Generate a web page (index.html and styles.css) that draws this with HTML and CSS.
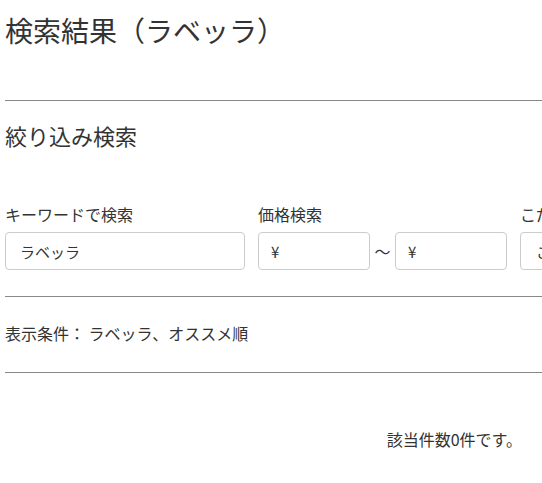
FILE: index.html
```html
<!DOCTYPE html>
<html lang="ja">

<head>
  <meta charset="UTF-8" />
  <meta name="viewport" content="width=device-width, initial-scale=1.0" />
  <title>検索結果</title>
  <link rel="stylesheet" href="styles.css">
</head>

<body>

  <div class="page">
    <h1 class="title">検索結果（ラベッラ）</h1>
    <hr class="rule rule-top">

    <h2 class="subtitle">絞り込み検索</h2>

    <div class="filters">
      <div class="field">
        <label class="label">キーワードで検索</label>
        <input class="input input-keyword" type="text" value="ラベッラ" />
      </div>

      <div class="field">
        <label class="label">価格検索</label>
        <div class="range">
          <input class="input input-price" type="text" value="¥" />
          <span class="tilde">～</span>
          <input class="input input-price" type="text" value="¥" />
        </div>
      </div>

      <div class="field">
        <label class="label">こだわり検索</label>
        <input class="input input-extra" type="text" value="こだわり" />
      </div>
    </div>

    <hr class="rule rule-mid">

    <p class="condition">表示条件： ラベッラ、オススメ順</p>

    <hr class="rule rule-bottom">

    <p class="count">該当件数0件です。</p>
  </div>

</body>

</html>
```

FILE: styles.css
```css
body {
  margin: 0;
  overflow: hidden;
  background-color: #fff;
  color: #333;
  font-family: "Noto Sans CJK JP", "Noto Sans", sans-serif;
}

.page {
  padding-left: 5px;
}

.title {
  margin: 12px 0 0;
  font-size: 28px;
  font-weight: normal;
  line-height: 36px;
}

.rule {
  margin: 0;
  border: 0;
  border-top: 1px solid #888;
}

.rule-top {
  margin-top: 52px;
}

.subtitle {
  margin: 19px 0 0;
  font-size: 22px;
  font-weight: normal;
  line-height: 30px;
}

.filters {
  margin-top: 53px;
  display: flex;
  gap: 13px;
  width: 800px;
}

.field {
  display: flex;
  flex-direction: column;
}

.label {
  font-size: 16px;
  line-height: 22px;
  margin-bottom: 7px;
}

.range {
  display: flex;
  align-items: center;
}

.tilde {
  width: 25px;
  text-align: center;
  font-size: 16px;
}

.input {
  box-sizing: border-box;
  height: 38px;
  border: 1px solid #ccc;
  border-radius: 4px;
  padding: 0 12px;
  font-family: inherit;
  font-size: 15px;
  color: #333;
  background-color: #fff;
}

.input-keyword {
  width: 240px;
  padding-left: 14px;
}

.input-price {
  width: 112px;
}

.input-extra {
  width: 200px;
  padding-left: 15px;
}

.rule-mid {
  margin-top: 26px;
}

.condition {
  margin: 25px 0 0;
  font-size: 16px;
  line-height: 22px;
}

.rule-bottom {
  margin-top: 28px;
}

.count {
  margin: 55px 0 0;
  padding-right: 20px;
  text-align: right;
  font-size: 16px;
  line-height: 22px;
}
```
